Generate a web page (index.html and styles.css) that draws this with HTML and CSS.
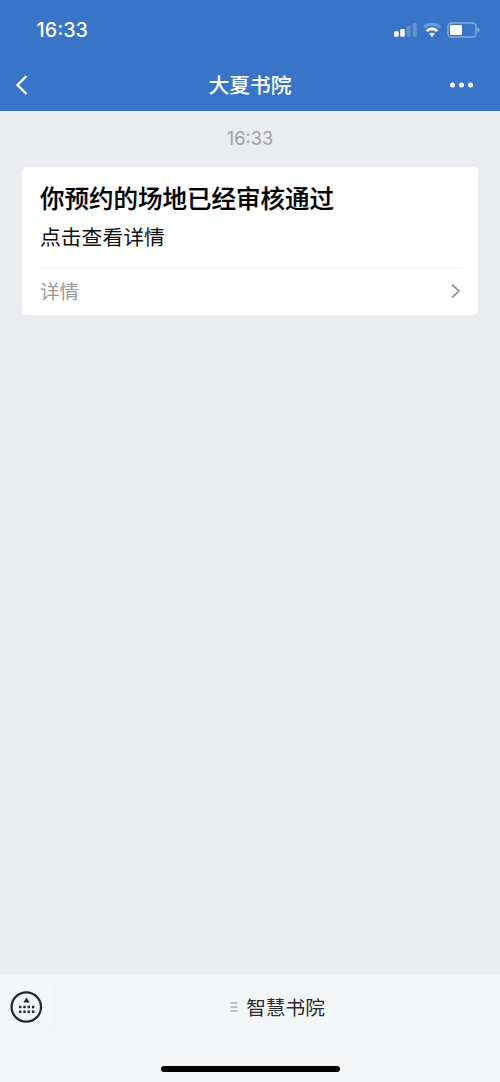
FILE: index.html
```html
<!DOCTYPE html>
<html lang="zh-CN">
<head>
<meta charset="utf-8">
<title>大夏书院</title>
<link rel="stylesheet" href="styles.css">
</head>
<body>
<div class="screen">
  <header class="header">
    <div class="status">
      <span class="clock">16:33</span>
      <svg class="status-icons" width="88" height="20" viewBox="0 0 88 20" fill="#fff">
        <rect x="2" y="11.3" width="4.6" height="5.5" rx="1.2"/>
        <rect x="8.2" y="9" width="4.6" height="7.8" rx="1.2"/>
        <rect x="14.5" y="6" width="4" height="10.8" rx="1" opacity=".22"/>
        <rect x="20.7" y="3" width="4" height="13.8" rx="1" opacity=".22"/>
        <path d="M31.7 7.200Q40 1 48.3 7.200" fill="none" stroke="#fff" stroke-width="2.6" opacity=".28"/>
        <path d="M34.600 11Q40 6.400 45.400 11" fill="none" stroke="#fff" stroke-width="2.8"/>
        <path d="M37.1 13.900Q40 11.700 42.9 13.900L40 16.900Z"/>
        <rect x="56" y="3" width="28" height="14" rx="3.5" fill="none" stroke="#fff" stroke-opacity=".42" stroke-width="1.3"/>
        <rect x="58" y="5" width="12" height="10" rx="1.3"/>
        <path d="M85.5 7.5Q87.6 8.3 87.6 10T85.5 12.5Z" opacity=".45"/>
      </svg>
    </div>
    <nav class="nav">
      <svg class="back" width="14" height="22" viewBox="0 0 14 22"><path d="M12.500 2 3.500 11l9 9" fill="none" stroke="#fff" stroke-width="2.3"/></svg>
      <h1 class="nav-title">大夏书院</h1>
      <svg class="more" width="26" height="6" viewBox="0 0 26 6" fill="#fff"><circle cx="3.500" cy="3" r="2.500"/><circle cx="12.500" cy="3" r="2.500"/><circle cx="21.500" cy="3" r="2.500"/></svg>
    </nav>
  </header>
  <main class="chat">
    <time class="time">16:33</time>
    <article class="card">
      <h2 class="card-title">你预约的场地已经审核通过</h2>
      <p class="card-text">点击查看详情</p>
      <div class="card-link">
        <span>详情</span>
        <svg width="10" height="16" viewBox="0 0 10 16"><path d="m1 1.500 7 6.500-7 6.500" fill="none" stroke="#999" stroke-width="1.900"/></svg>
      </div>
    </article>
  </main>
  <footer class="footer">
    <div class="toolbar">
      <div class="keyboard">
        <svg width="34" height="34" viewBox="0 0 34 34" fill="#25272a">
          <circle cx="17.300" cy="17" r="14.700" fill="none" stroke="#25272a" stroke-width="2.200"/>
          <path d="m17.500 7.500 3.200 4.900h-6.400Z"/>
          <path d="M10 17h16M10 21.800h16" fill="none" stroke="#25272a" stroke-width="2.400" stroke-dasharray="2.400 1.900"/>
        </svg>
      </div>
      <div class="menu">
        <svg width="8" height="10" viewBox="0 0 8 10"><path d="M.5 1h7M.5 5h7M.5 9h7" stroke="#888a8d" stroke-width="1.200"/></svg>
        <span>智慧书院</span>
      </div>
    </div>
    <div class="home-bar"></div>
  </footer>
</div>
</body>
</html>
```
FILE: styles.css
```css
* { box-sizing: border-box; }
body { margin: 0; font-family: Inter, "Noto Sans CJK SC", sans-serif; }
h1, h2, p { margin: 0; }
svg { display: block; flex: none; }
.screen { height: 1082px; display: flex; flex-direction: column; background: #eaecf0; overflow: hidden; }
.header { height: 111px; background: #3874c7; color: #fff; }
.status { height: 60px; padding: 0 20px 0 36.5px; display: flex; align-items: center; justify-content: space-between; }
.clock { font-size: 19.8px; font-weight: 500; }
.nav { height: 50px; padding: 0 25px 0 14px; display: grid; grid-template-columns: 80px 1fr 69px; align-items: center; }
.nav-title { padding-bottom: 2px; font-size: 20.8px; font-weight: 500; line-height: 28px; text-align: center; font-family: "Noto Sans CJK SC", sans-serif; }
.more { justify-self: end; }
.chat { flex: 1; padding: 16px 22px 0; }
.time { display: block; height: 22px; margin-bottom: 18px; line-height: 22px; text-align: center; font-size: 18.2px; color: #a0a1a4; }
.card { height: 148px; padding: 13px 16px 0 18px; background: #fff; border-radius: 5px; font-family: "Noto Sans CJK SC", sans-serif; }
.card-title { font-size: 24.5px; line-height: 36px; font-weight: 500; color: #000; white-space: nowrap; -webkit-text-stroke: .2px #000; }
.card-text { margin-top: 4px; font-size: 20.8px; line-height: 32px; color: #111; }
.card-link { height: 46px; margin-top: 15px; padding-right: 1px; border-top: 1px solid #f6f6f6; display: flex; align-items: center; justify-content: space-between; font-size: 19.5px; color: #999; }
.footer { height: 109px; background: #f5f6f8; border-top: 1px solid #e3e5e8; display: flex; flex-direction: column; align-items: center; }
.toolbar { width: 100%; height: 66px; display: flex; align-items: center; }
.keyboard { width: 55px; height: 44px; padding-left: 9px; display: flex; align-items: center; border-right: 1px solid #f0f1f3; }
.menu { flex: 1; display: flex; align-items: center; justify-content: center; gap: 8px; font: 19.7px/30px "Noto Sans CJK SC", sans-serif; color: #292b2e; }
.home-bar { width: 179px; height: 6px; margin-top: 26px; border-radius: 3px; background: #000; }
```
